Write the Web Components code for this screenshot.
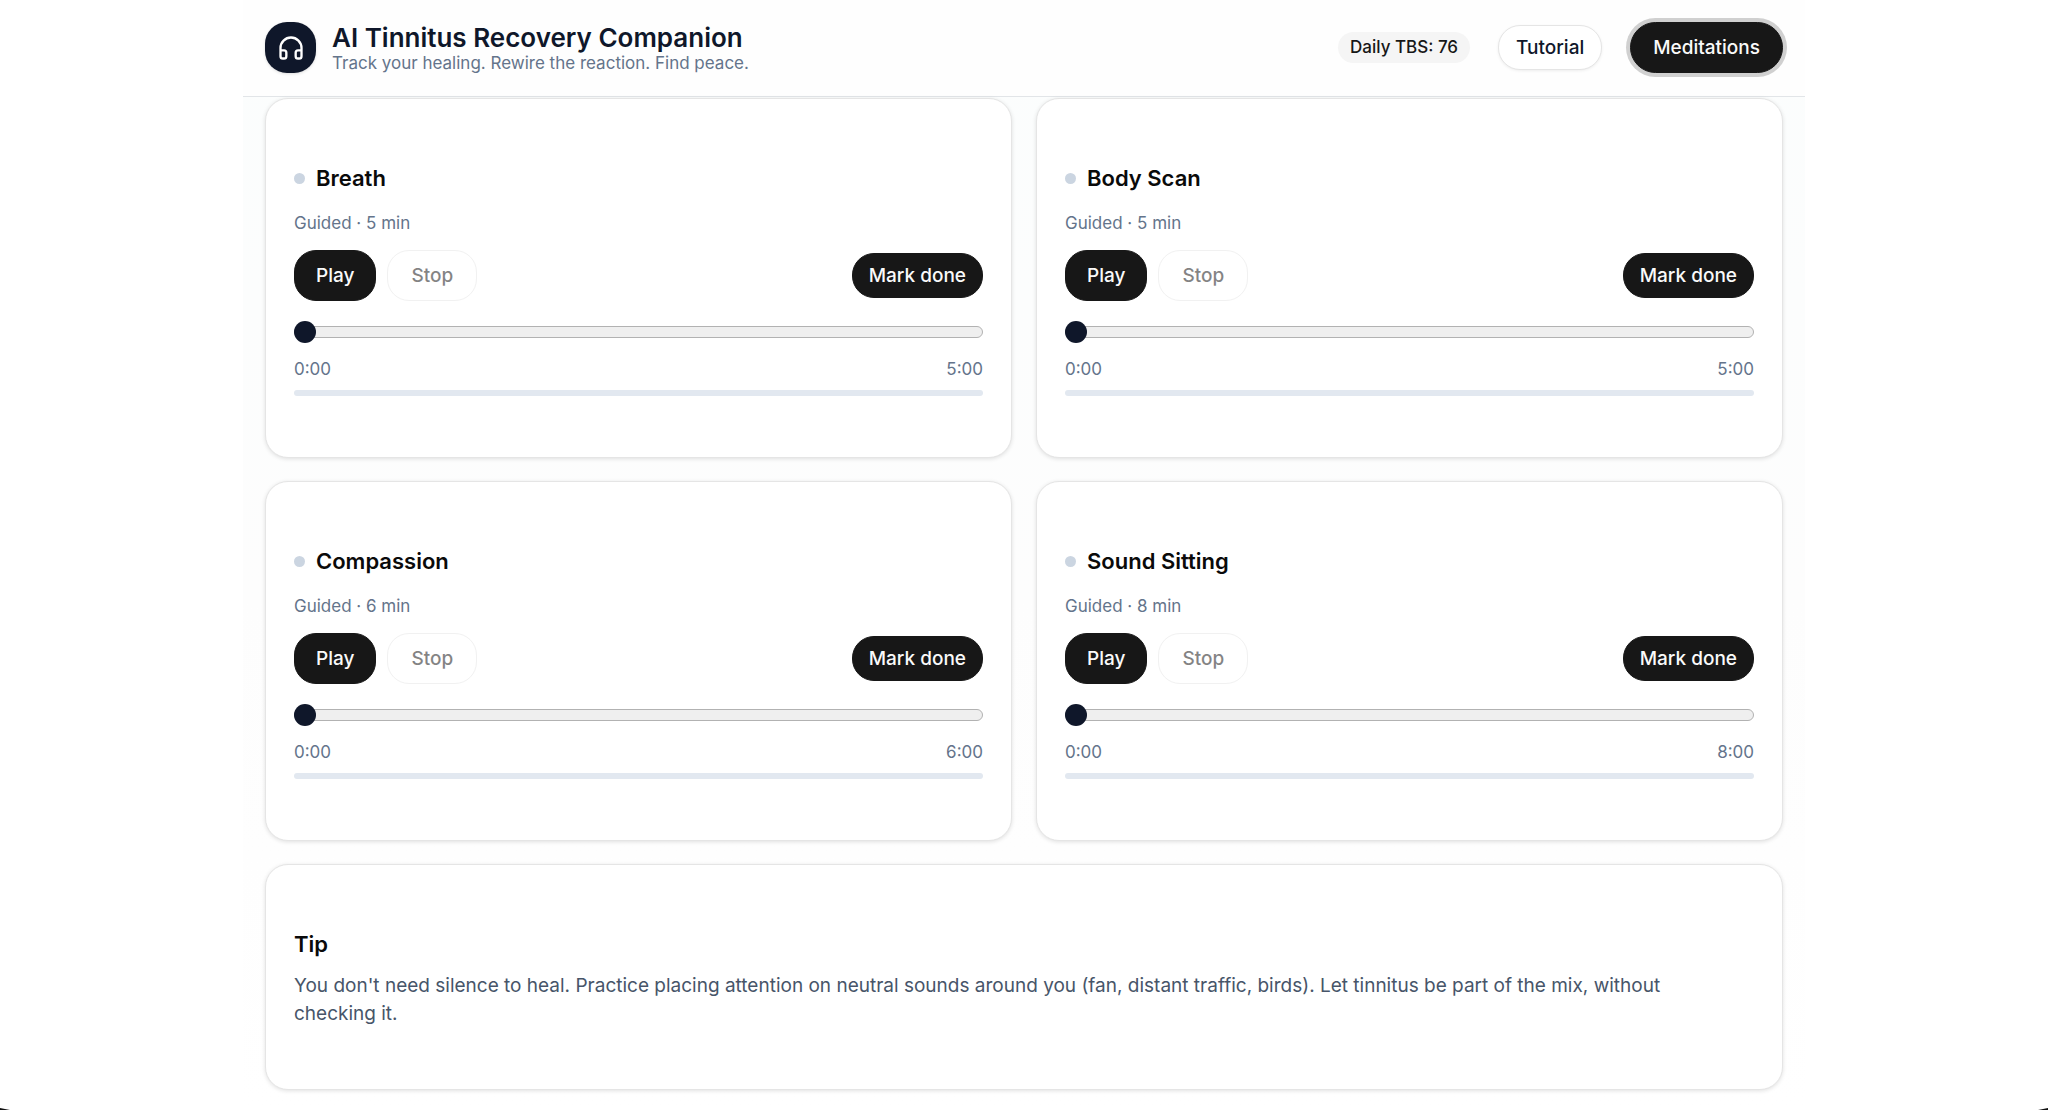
<!DOCTYPE html>
<html lang="en">
<head>
<meta charset="utf-8">
<meta name="viewport" content="width=device-width, initial-scale=1">
<title>AI Tinnitus Recovery Companion</title>
<style>
  body { margin: 0; background: #fff; color: #0a0a0a; font-family: Inter, "Liberation Sans", sans-serif; }
</style>
</head>
<body>
<tinnitus-app>
  <app-header slot="header" heading="AI Tinnitus Recovery Companion" tagline="Track your healing. Rewire the reaction. Find peace.">
    <score-badge>Daily TBS: 76</score-badge>
    <pill-button variant="outline">Tutorial</pill-button>
    <pill-button variant="active">Meditations</pill-button>
  </app-header>
  <meditation-card name="Breath" minutes="5"></meditation-card>
  <meditation-card name="Body Scan" minutes="5"></meditation-card>
  <meditation-card name="Compassion" minutes="6"></meditation-card>
  <meditation-card name="Sound Sitting" minutes="8"></meditation-card>
  <tip-card heading="Tip">You don't need silence to heal. Practice placing attention on neutral sounds around you (fan, distant traffic, birds). Let tinnitus be part of the mix, without checking it.</tip-card>
</tinnitus-app>

<script>
const define = (name, render, extra) => customElements.define(name, class extends HTMLElement {
  connectedCallback() {
    if (this.shadowRoot) return;
    this.attachShadow({ mode: "open" }).innerHTML = "<style>*{box-sizing:border-box}</style>" + render(this);
    if (extra) extra(this);
  }
});

define("tinnitus-app", () => `
  <style>
    :host { display: block; min-height: 100vh; }
    .page { max-width: 1562px; min-height: 100vh; margin: 0 auto; background: linear-gradient(#fbfdfd, #fdfdfd 600px, #fff); }
    main { display: grid; grid-template-columns: repeat(2, minmax(0, 1fr)); gap: 23px 24px; padding: 1px 22px 20px; }
    ::slotted(tip-card) { grid-column: 1 / -1; }
    .corner { position: fixed; bottom: 0; width: 10px; height: 2px; background: #111; }
    .left { left: 0; clip-path: polygon(0 0, 100% 100%, 0 100%); }
    .right { right: 0; clip-path: polygon(100% 0, 100% 100%, 0 100%); }
    @media (max-width: 800px) { main { grid-template-columns: minmax(0, 1fr); } }
  </style>
  <div class="page">
    <slot name="header"></slot>
    <main><slot></slot></main>
  </div>
  <span class="corner left"></span><span class="corner right"></span>`);

define("app-header", el => `
  <style>
    :host { display: block; background: #fefefe; border-bottom: 1px solid #e2e5e8; }
    header { display: flex; flex-wrap: wrap; align-items: center; justify-content: space-between; gap: 16px; padding: 22px 22px 23px; }
    .brand { display: flex; align-items: center; gap: 16px; }
    .logo { display: grid; place-items: center; width: 51px; height: 51px; border-radius: 22px; background: #0f172a; box-shadow: 0 1px 3px #0002; color: #fff; }
    svg { display: block; width: 28px; height: 28px; }
    h1 { margin: 0; font-size: 26px; line-height: 31px; font-weight: 600; color: #0f172a; }
    p { margin: 0; font-size: 17px; line-height: 20px; color: #64748b; }
    nav { display: flex; align-items: center; gap: 28px; }
  </style>
  <header>
    <div class="brand">
      <div class="logo"><svg viewBox="0 0 24 24" fill="none" stroke="currentColor" stroke-width="2" stroke-linecap="round" stroke-linejoin="round" aria-hidden="true"><path d="M3 14h3a2 2 0 0 1 2 2v3a2 2 0 0 1-2 2H5a2 2 0 0 1-2-2v-7a9 9 0 0 1 18 0v7a2 2 0 0 1-2 2h-1a2 2 0 0 1-2-2v-3a2 2 0 0 1 2-2h3"/></svg></div>
      <div><h1>${el.getAttribute("heading")}</h1><p>${el.getAttribute("tagline")}</p></div>
    </div>
    <nav><slot></slot></nav>
  </header>`);

define("score-badge", () => `
  <style>
    :host { display: block; padding: 4px 12px; border-radius: 16px; background: #f5f5f5; color: #171717; font-size: 17px; line-height: 23px; font-weight: 500; white-space: nowrap; }
  </style><slot></slot>`);

define("pill-button", el => `
  <style>
    :host { display: block; }
    button { display: block; height: 51px; padding: 0 21px; border: 1px solid #171717; border-radius: 22px; background: #171717; color: #fafafa; font: 500 19px/26px Inter, "Liberation Sans", sans-serif; white-space: nowrap; cursor: pointer; }
    :host([variant=outline]) button { height: 45px; padding: 0 17px; background: #fff; border-color: #e5e5e5; color: #0f172a; box-shadow: 0 1px 3px #0001; }
    :host([variant=small]) button { height: 45px; padding: 0 16px; }
    :host([variant=active]) button { padding: 0 22px; border-radius: 26px; box-shadow: 0 0 0 4px #d0d0d0; }
    :host([variant=muted]) button { padding: 0 23px; background: #fff; border-color: #e5e5e5; color: #0a0a0a; opacity: .5; cursor: default; }
  </style>
  <button type="button" ${el.getAttribute("variant") === "muted" ? "disabled" : ""}><slot></slot></button>`);

define("surface-card", () => `
  <style>
    :host { display: block; padding: 61px 28px; border: 1px solid #e5e5e5; border-radius: 23px; background: #fff; box-shadow: 0 1px 4px #0000001f; }
  </style><slot></slot>`);

define("meditation-card", el => {
  const name = el.getAttribute("name"), min = el.getAttribute("minutes");
  return `
  <style>
    :host { display: block; }
    h2 { display: flex; align-items: center; gap: 11px; margin: 0; font-size: 22px; line-height: 36px; font-weight: 600; color: #0a0a0a; }
    h2::before { content: ""; width: 11px; height: 11px; border-radius: 50%; background: #cbd5e1; }
    p { margin: 16px 0; font-size: 17px; line-height: 22px; color: #64748b; }
    .controls { display: flex; align-items: center; gap: 11px; }
    .controls :last-child { margin-left: auto; }
    input { appearance: none; display: block; width: 100%; height: 22px; margin: 20px 0 15px; background: none; }
    input::-webkit-slider-runnable-track { height: 12px; border: 1px solid #b2b2b2; border-radius: 6px; background: #efefef; }
    input::-webkit-slider-thumb { appearance: none; width: 22px; height: 22px; margin: -6px 0 0 -1px; border-radius: 50%; background: #0f172a; }
    .times { display: flex; justify-content: space-between; font-size: 17px; line-height: 22px; color: #64748b; }
    progress { appearance: none; display: block; width: 100%; height: 6px; margin-top: 10px; border: 0; border-radius: 3px; overflow: hidden; background: #e2e8f0; }
    progress::-webkit-progress-bar { background: #e2e8f0; }
    progress::-webkit-progress-value { background: #0f172a; }
  </style>
  <surface-card>
    <h2>${name}</h2>
    <p>Guided · ${min} min</p>
    <div class="controls">
      <pill-button>Play</pill-button>
      <pill-button variant="muted">Stop</pill-button>
      <pill-button variant="small">Mark done</pill-button>
    </div>
    <input type="range" min="0" max="${min * 60}" value="0" aria-label="${name} position">
    <div class="times"><span>0:00</span><span>${min}:00</span></div>
    <progress max="${min * 60}" value="0" aria-label="${name} progress"></progress>
  </surface-card>`;
}, el => {
  const root = el.shadowRoot;
  const show = s => Math.floor(s / 60) + ":" + String(s % 60).padStart(2, "0");
  root.querySelector("input").addEventListener("input", e => {
    const s = Number(e.target.value);
    root.querySelector(".times span").textContent = show(s);
    root.querySelector("progress").value = s;
  });
});

define("tip-card", el => `
  <style>
    :host { display: block; }
    h2 { margin: 0 0 10px; font-size: 22px; line-height: 36px; font-weight: 600; color: #0a0a0a; }
    p { margin: 0; padding-right: 16px; font-size: 19px; line-height: 28px; color: #475569; }
  </style>
  <surface-card><h2>${el.getAttribute("heading")}</h2><p><slot></slot></p></surface-card>`);
</script>
</body>
</html>
